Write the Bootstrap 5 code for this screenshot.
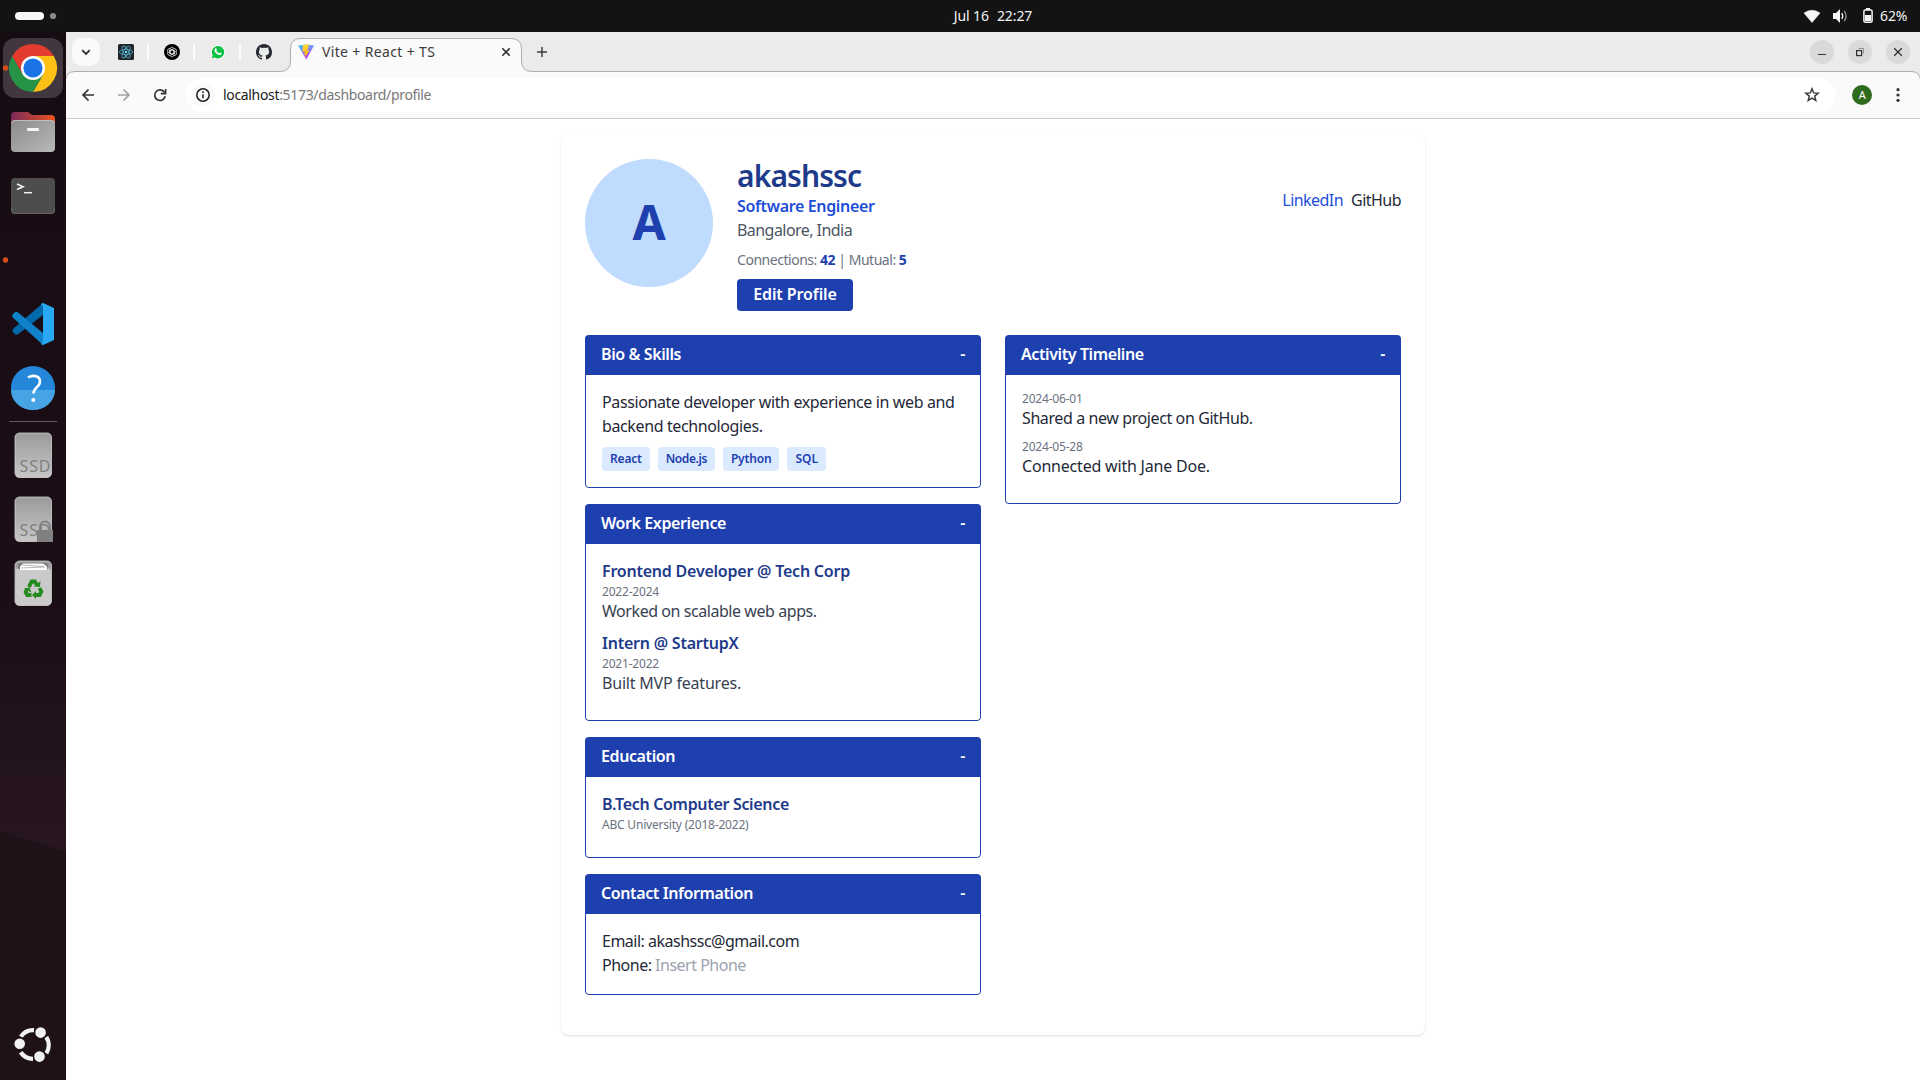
<!DOCTYPE html>
<html lang="en">
<head>
<meta charset="utf-8">
<meta name="viewport" content="width=device-width, initial-scale=1">
<title>Vite + React + TS</title>
<link href="https://cdn.jsdelivr.net/npm/bootstrap@5.3.0/dist/css/bootstrap.min.css" rel="stylesheet">
<style>
  :root { --navy: #1e40af; --navy-deep: #1e3a8a; }
  body { font-family: "Noto Sans", "Open Sans", sans-serif; font-size: 16px; line-height: 24px; letter-spacing: -.4px; color: #1f2937; height: 1080px; }
  svg { display: block; flex: none; }
  p, h1 { margin: 0; }

  /* desktop */
  .sysbar { height: 32px; background: #131313; color: #f2f2f2; font-size: 14px; letter-spacing: -.1px; }
  .sysbar .side { width: 300px; }
  .clock { padding-left: 66px; padding-bottom: 1px; }
  .dock { width: 66px; flex: none; padding-top: 4px; background: linear-gradient(197deg, transparent 783px, #1e1218 784px), linear-gradient(#180c13, #1b0e17 55%, #28161f 78%); }
  .slot { height: 64px; width: 66px; }
  .dock hr { width: 48px; height: 1px; margin: 1px 0; border: 0; background: #62575d; opacity: 1; }
  .dock text { letter-spacing: 0; }

  /* browser */
  .strip { height: 46px; background: #ebebeb; font-size: 14px; margin-bottom: -7px; }
  .strip > .outline { left: 0; top: 0; }
  .strip-row { height: 40px; z-index: 1; }
  .tab-menu { width: 28px; height: 28px; border-radius: 10px; background: #fafafa; margin-left: 6px; margin-right: 11px; }
  .pinned { width: 46px; padding-left: 7px; }
  .pinned .sep { width: 2px; height: 16px; background: #fbfbfb; margin-left: 13px; }
  .active-tab { width: 231px; margin-left: -5px; padding: 0 9px 0 8px; color: #3c3c3c; letter-spacing: .35px; }
  .new-tab { margin-left: 15px; }
  .win { width: 24px; height: 24px; border-radius: 50%; background: #dadada; }
  .toolbar { position: relative; z-index: 1; height: 48px; border-bottom: 1px solid #c9c9c9; font-size: 14px; }
  .omni { height: 34px; border-radius: 17px; background: #fff; color: #777; letter-spacing: -.33px; padding-left: 5px; }
  .omni .info { width: 24px; height: 24px; border-radius: 50%; background: #fafafa; margin-right: 8px; }
  .omni b { font-weight: 400; color: #1b1b1b; }
  .account { width: 20px; height: 20px; border-radius: 50%; background: #2f6b1d; color: #fff; font-size: 11px; }

  /* page */
  .page { background: #fff; padding-top: 16px; }
  .profile { width: 864px; height: 900px; padding: 24px; border-radius: 8px; background: #fff; box-shadow: 0 1px 3px rgba(0,0,0,.1), 0 1px 2px -1px rgba(0,0,0,.1); }
  .profile p { line-height: 22px; padding-bottom: 2px; }
  .face { width: 128px; height: 128px; padding-bottom: 2px; border-radius: 50%; background: #bfdbfe; color: var(--navy); font-size: 48px; font-weight: 700; }
  .profile h1 { font-size: 30px; line-height: 34px; padding-bottom: 2px; font-weight: 600; letter-spacing: -.9px; color: var(--navy-deep); }
  .role { color: #1d4ed8; font-weight: 600; letter-spacing: -.35px; }
  .place { color: #4b5563; letter-spacing: -.55px; }
  .profile .stats { font-size: 14px; line-height: 18px; color: #6b7280; letter-spacing: -.47px; }
  .stats b { color: var(--navy); font-weight: 700; }
  .btn-edit { --bs-btn-bg: #1e40af; --bs-btn-color: #fff; --bs-btn-border-width: 0; --bs-btn-border-radius: 4px; --bs-btn-padding-y: 0; --bs-btn-padding-x: 0; width: 116px; height: 32px; padding-bottom: 3px; line-height: 28px; font-weight: 600; letter-spacing: -.1px; }
  .links { padding-top: 29px; letter-spacing: -.54px; }
  .links a { text-decoration: none; color: #1f2937; }
  .links a.blue { color: #1d4ed8; }
  .col-half { width: 396px; }
  .panel { border-radius: 4px; overflow: hidden; margin-bottom: 16px; }
  .panel-top { height: 40px; padding: 7px 16px 9px; background: var(--navy); color: #fff; font-weight: 600; letter-spacing: -.4px; }
  .panel-in { border: 1px solid var(--navy); border-top: 0; border-radius: 0 0 4px 4px; padding: 16px; }
  .chip { height: 24px; padding: 0 8px; border-radius: 4px; background: #dbeafe; color: var(--navy); font-size: 12px; font-weight: 600; letter-spacing: -.18px; }
  .chip.tight { letter-spacing: -.42px; }
  .chip.open { letter-spacing: .1px; }
  .job { color: var(--navy-deep); font-weight: 600; letter-spacing: -.22px; }
  .job.tight { letter-spacing: -.32px; }
  .profile .when { font-size: 12px; line-height: 16px; padding-bottom: 0; color: #6b7280; letter-spacing: -.2px; }
  .what { color: #374151; letter-spacing: -.44px; }
  .what.open, .event.open { letter-spacing: -.2px; }
  .hint { color: #9ca3af; }
  .profile .body-copy { line-height: 24px; margin-top: -1px; padding-bottom: 1px; letter-spacing: -.38px; }
  .contact { letter-spacing: -.5px; }
</style>
</head>
<body class="d-flex flex-column overflow-hidden">

<header class="sysbar d-flex align-items-center justify-content-between flex-shrink-0">
  <div class="side"><svg width="66" height="32"><rect x="15" y="12" width="29" height="8" rx="4" fill="#f6f6f6"/><circle cx="53" cy="16" r="3.1" fill="#8a8a8a"/></svg></div>
  <div class="clock d-flex gap-2"><span>Jul 16</span><span>22:27</span></div>
  <div class="side d-flex align-items-center justify-content-end pe-2">
    <svg width="80" height="32" viewBox="1800 0 80 32" fill="#f6f6f6">
      <path d="M1804 13q8-5.500 16 0l-8 9.500z" stroke="#f6f6f6" stroke-linejoin="round" stroke-width=".6"/>
      <path d="M1833 13h3l4-4v14l-4-4h-3z"/>
      <path d="M1841.800 13q1.800 3 0 6" fill="none" stroke="#f6f6f6" stroke-width="1.300"/><path d="M1844.300 10.800q3.500 5.200 0 10.400" fill="none" stroke="#8d8d8d" stroke-width="1.400"/>
      <rect x="1863.900" y="10" width="8.200" height="12.200" rx="1.500" fill="none" stroke="#f6f6f6" stroke-width="1.500"/><rect x="1866" y="8" width="4" height="2"/><rect x="1865" y="15" width="6" height="6"/>
    </svg>
    <span style="width:32px">62%</span>
  </div>
</header>

<div class="d-flex flex-grow-1">
  <nav class="dock d-flex flex-column align-items-center">
    <svg class="slot" viewBox="0 36 66 64">
      <rect x="3" y="38" width="60" height="60" rx="12" fill="#42373e"/>
      <circle cx="5.500" cy="68" r="2.700" fill="#d64d1b"/>
      <path d="M33 68 12.200 56A24 24 0 0 1 53.800 56z" fill="#e33b2e"/>
      <path d="M33 56H53.800A24 24 0 0 1 33 92L43.400 74z" fill="#fcc016"/>
      <path d="M12.200 56A24 24 0 0 0 33 92L43.400 74 33 68 22.600 74z" fill="#269347"/>
      <path d="M12.200 56 22.600 74 33 56z" fill="#e33b2e"/>
      <circle cx="33" cy="68" r="12" fill="#fff"/><circle cx="33" cy="68" r="9.600" fill="#1b73e8"/>
    </svg>
    <svg class="slot" viewBox="0 100 66 64">
      <defs><linearGradient id="fo"><stop stop-color="#7b2a59"/><stop offset="1" stop-color="#e95420"/></linearGradient><linearGradient id="gr" x2="1" y2="1"><stop stop-color="#8b8b8b"/><stop offset="1" stop-color="#b9b9b9"/></linearGradient></defs>
      <path d="M11 116q0-4 4-4h13l4 3h19q4 0 4 4v8H11z" fill="url(#fo)"/>
      <rect x="11" y="120" width="44" height="32" rx="4" fill="url(#gr)"/><path d="M12 123q0-2.500 3-2.500h36q3 0 3 2.500" fill="none" stroke="#bdbdbd"/>
      <rect x="27" y="128" width="12" height="3" rx="1" fill="#f5f5f5"/>
    </svg>
    <svg class="slot" viewBox="0 164 66 64">
      <rect x="11" y="178" width="44" height="36" rx="4" fill="#4d4d4d"/><path d="M11.500 208v2q0 3.500 3.500 3.500h36q3.500 0 3.500-3.500v-2" fill="none" stroke="#626262"/>
      <path d="m17 184 6 2.800-6 2.800" fill="none" stroke="#f3f3f3" stroke-width="1.700"/><path d="M24 192.700h8" stroke="#f3f3f3" stroke-width="1.500"/>
    </svg>
    <svg class="slot" viewBox="0 228 66 64"><circle cx="5.500" cy="260" r="2.700" fill="#d64d1b"/></svg>
    <svg class="slot" viewBox="0 292 66 64">
      <path d="M43 303 13 329q-1.500 2 0 3.300l2 2q1.500 1 3 0L43 315z" fill="#0068ab"/>
      <path d="M43 345 12.800 317.500q-1.500-1.800 0-3.200l2-2q1.500-1.200 3 0L43 333z" fill="#0f82c9"/>
      <path d="M43 303 54 308v32l-11 5q-1.500 0-2-1.500 2 .500 2-2v-35q0-2-2-1.500.500-2 2-2z" fill="#29a9f3"/>
    </svg>
    <svg class="slot" viewBox="0 356 66 64">
      <circle cx="33" cy="388" r="22" fill="#2487d9"/><path d="M11 390a22 20 0 0 0 44 0z" fill="#46a3e4"/>
      <path d="M28 377.500c6-3.500 12-1 12 4 0 6-6.500 5.500-6.500 12" fill="none" stroke="#fff" stroke-width="2.600"/><circle cx="33.300" cy="400" r="2.100" fill="#fff"/>
    </svg>
    <hr>
    <svg class="slot" viewBox="0 423 66 64">
      <defs><linearGradient id="dk" x2="0" y2="1"><stop stop-color="#9b9b9b"/><stop offset="1" stop-color="#c6c6c6"/></linearGradient></defs>
      <rect x="15" y="433" width="36.500" height="44.500" rx="4.500" fill="url(#dk)" stroke="#d2d2d2" stroke-width=".8"/>
      <text x="19.500" y="472" font-size="16" textLength="31" fill="#808080">SSD</text>
    </svg>
    <svg class="slot" viewBox="0 487 66 64">
      <rect x="15" y="497" width="36.500" height="44.500" rx="4.500" fill="url(#dk)" stroke="#d2d2d2" stroke-width=".8"/>
      <text x="19.500" y="536" font-size="16" textLength="31" fill="#808080">SSD</text>
      <rect x="37" y="530" width="16" height="12" fill="#808080"/><path d="M40 530v-3.500a5 5 0 0 1 10 0v3.500" fill="none" stroke="#808080" stroke-width="1.800"/>
    </svg>
    <svg class="slot" viewBox="0 551 66 64">
      <rect x="15" y="561" width="36.500" height="44.500" rx="4.500" fill="url(#dk)" stroke="#d2d2d2" stroke-width=".8"/><rect x="15.500" y="568" width="35.500" height="37" rx="4" fill="#cacaca"/>
      <rect x="18" y="563" width="30" height="7" rx="3" fill="#777"/><path d="M20 570v-3.500l3-3h20l4 3v3.500z" fill="#fff"/><path d="m22 565 22 1.500M21 568l24-1" stroke="#999" stroke-width=".7"/>
      <g fill="none" stroke="#258a1c" stroke-width="3.800"><path d="m28.800 587 3-5.500h3l2 3.500"/><path d="m39.500 588 1.800 3.500-1.700 3.500h-4.600"/><path d="M31.500 595h-4.300l-1.600-3 1.800-3.500"/></g>
      <g fill="#258a1c"><path d="m34 586.500 6 .5.500-6z"/><path d="M36 591v8l-4-4z"/><path d="m24 588.500 5.500-1 2 5z"/></g>
    </svg>
    <svg class="slot mt-auto mb-1" viewBox="0 1012 66 64">
      <g fill="none" stroke="#f2f2f2" stroke-width="4.300"><path d="M20.900 1036.600A14.800 14.800 0 0 1 34 1030.200"/><path d="M46.300 1037A14.800 14.800 0 0 1 46.300 1053.200"/><path d="M20.700 1052.200A14.800 14.800 0 0 0 33 1058.800"/></g>
      <g fill="#f2f2f2" stroke="#1e1218" stroke-width="1.400"><circle cx="40.600" cy="1032.600" r="6"/><circle cx="19.700" cy="1043.800" r="6"/><circle cx="39.500" cy="1056.600" r="6"/></g>
    </svg>
  </nav>

  <main class="d-flex flex-column flex-grow-1">
    <div class="strip position-relative flex-shrink-0">
      <svg class="outline position-absolute" width="1854" height="87" viewBox="66 32 1854 87">
        <path d="M65.500 119V81q0-9.500 9.500-9.500H280q10.500 0 10.500-10.500V49q0-10.500 10.500-10.500H511q10.500 0 10.500 10.500V61q0 10.500 10.500 10.500H1911q9.500 0 9.500 9.500V119z" fill="#fafafa" stroke="#adadad"/>
      </svg>
      <div class="strip-row d-flex align-items-center position-relative">
        <div class="tab-menu d-flex align-items-center justify-content-center"><svg width="12" height="12" viewBox="0 0 12 12"><path d="m2.200 4.200 3.800 3.800 3.800-3.800" fill="none" stroke="#303030" stroke-width="1.800"/></svg></div>
        <div class="pinned d-flex align-items-center">
          <svg width="16" height="16" viewBox="0 0 16 16"><rect width="16" height="16" rx="1.500" fill="#20232a"/><g fill="none" stroke="#4fa3bd" stroke-width=".9"><ellipse cx="8" cy="8" rx="6.600" ry="2.600"/><ellipse cx="8" cy="8" rx="6.600" ry="2.600" transform="rotate(60 8 8)"/><ellipse cx="8" cy="8" rx="6.600" ry="2.600" transform="rotate(120 8 8)"/></g><circle cx="8" cy="8" r="1.300" fill="#61dafb"/></svg>
          <span class="sep"></span>
        </div>
        <div class="pinned d-flex align-items-center">
          <svg width="16" height="16" viewBox="0 0 16 16"><circle cx="8" cy="8" r="8" fill="#000"/><g fill="none" stroke="#eee" stroke-width=".75"><g id="pt"><path d="M6 8V5.200a2.100 2.100 0 0 1 4-.8M6 6.800l2-1.200 3 1.700"/></g><use href="#pt" transform="rotate(60 8 8)"/><use href="#pt" transform="rotate(120 8 8)"/><use href="#pt" transform="rotate(180 8 8)"/><use href="#pt" transform="rotate(240 8 8)"/><use href="#pt" transform="rotate(300 8 8)"/></g></svg>
          <span class="sep"></span>
        </div>
        <div class="pinned d-flex align-items-center">
          <svg width="16" height="16" viewBox="0 0 16 16"><path d="M.8 15.300 1.900 11.500A7 7 0 1 1 4.700 14.300z" fill="#fff"/><path d="M1.700 14.400 2.700 11.300A6.200 6.200 0 1 1 4.900 13.500z" fill="#0bc143"/><path d="M5.300 4.500c.8-.6 1.100-.2 1.600 1.200.1.500-.5.700-.5 1.100.6 1.200 1.500 1.900 2.700 2.400.4 0 .7-.9 1.100-.8 1.500.7 1.500.8 1.300 1.500-.5 1.200-2 1.300-3.500.6-1.600-.7-2.900-2-3.400-3.300-.3-1.100 0-2.100.7-2.700z" fill="#fff"/></svg>
          <span class="sep"></span>
        </div>
        <div class="pinned d-flex align-items-center">
          <svg width="16" height="16" viewBox="0 0 16 16" fill="#24292f"><path d="M8 0C3.580 0 0 3.580 0 8c0 3.540 2.290 6.530 5.470 7.590.4.070.55-.17.55-.38 0-.19-.01-.82-.01-1.490-2.010.37-2.530-.49-2.690-.94-.09-.23-.48-.94-.82-1.130-.28-.15-.68-.52-.01-.53.63-.01 1.080.58 1.230.82.72 1.210 1.870.87 2.330.66.07-.52.28-.87.51-1.070-1.780-.2-3.640-.89-3.640-3.950 0-.87.31-1.590.82-2.150-.08-.2-.36-1.020.08-2.120 0 0 .67-.21 2.200.82.64-.18 1.320-.27 2-.27s1.360.09 2 .27c1.530-1.040 2.200-.82 2.200-.82.44 1.100.16 1.920.08 2.120.51.56.82 1.270.82 2.150 0 3.070-1.870 3.750-3.650 3.950.29.25.54.73.54 1.480 0 1.070-.01 1.930-.01 2.200 0 .21.15.46.55.38A8.010 8.010 0 0 0 16 8c0-4.420-3.580-8-8-8z"/></svg>
        </div>
        <div class="active-tab d-flex align-items-center">
          <svg class="me-2" width="16" height="16" viewBox="0 0 16 16"><defs><linearGradient id="vt" x2=".4" y2="1"><stop stop-color="#41d1ff"/><stop offset="1" stop-color="#bd34fe"/></linearGradient><linearGradient id="vb" x2="0" y2="1"><stop stop-color="#ffdd35"/><stop offset="1" stop-color="#ffa800"/></linearGradient></defs><path d="M0 1.500 8 .5l8 1L8.300 15.600z" fill="url(#vt)"/><path d="M11.200 0 5 1 4.500 7.800l2.400-.4-.8 3.500 1.400-.4-.7 3.600 4.800-8-2.300.3z" fill="url(#vb)"/></svg>
          <span>Vite + React + TS</span>
          <svg class="ms-auto" width="12" height="12" viewBox="0 0 12 12"><path d="m2.300 2.300 7.400 7.400m0-7.400-7.400 7.400" stroke="#303030" stroke-width="1.600"/></svg>
        </div>
        <svg class="new-tab" width="12" height="12" viewBox="0 0 12 12"><path d="M6 1v10M1 6h10" stroke="#3c3c3c" stroke-width="1.500"/></svg>
        <div class="d-flex ms-auto" style="gap:14px;padding-right:10px">
          <div class="win"><svg width="24" height="24"><path d="M8 14.500h8" stroke="#303030"/></svg></div>
          <div class="win"><svg width="24" height="24" fill="none"><path d="M10.500 8.500h5v5" stroke="#8d8d8d"/><rect x="8.600" y="10.600" width="5" height="5" stroke="#303030" stroke-width="1.200"/></svg></div>
          <div class="win"><svg width="24" height="24"><path d="m8.200 8.200 7.600 7.600m0-7.600-7.600 7.600" stroke="#303030" stroke-width="1.300"/></svg></div>
        </div>
      </div>
    </div>
    <div class="toolbar flex-shrink-0 d-flex align-items-center">
      <svg width="120" height="34" viewBox="66 78 120 34" fill="none" stroke-width="1.700"><path d="M94 95H83m5.500-5.500L83 95l5.500 5.500" stroke="#333"/><path d="M118 95h11m-5.500-5.500L129 95l-5.500 5.500" stroke="#a3a3a3"/><path d="M164.600 92.500a5.300 5.300 0 1 0 .6 3.800" stroke="#333"/><path d="M165.600 89v4.700h-4.800" stroke="#333"/></svg>
      <div class="omni d-flex align-items-center flex-grow-1">
        <span class="info"><svg width="24" height="24"><circle cx="12" cy="12" r="6.200" fill="none" stroke="#1f1f1f" stroke-width="1.500"/><path d="M12 11.200v4M12 8.300v1.600" stroke="#1f1f1f" stroke-width="1.500"/></svg></span>
        <span><b>localhost</b>:5173/dashboard/profile</span>
        <svg class="ms-auto me-3" width="16" height="16" viewBox="0 0 16 16"><path d="m8 1.700 1.700 4.200 4.500.3-3.500 2.900 1.100 4.400L8 11.100l-3.800 2.400 1.100-4.400L1.800 6.200l4.500-.3z" fill="none" stroke="#333" stroke-width="1.400"/></svg>
      </div>
      <span class="account d-flex align-items-center justify-content-center ms-3">A</span>
      <svg class="mx-2" width="32" height="16" viewBox="0 0 32 16" fill="#333"><circle cx="18" cy="2.700" r="1.600"/><circle cx="18" cy="8" r="1.600"/><circle cx="18" cy="13.300" r="1.600"/></svg>
    </div>

    <div class="page flex-grow-1">
      <section class="profile mx-auto">
        <div class="d-flex">
          <div class="face d-flex align-items-center justify-content-center">A</div>
          <div class="ms-4">
            <h1>akashssc</h1>
            <p class="role">Software Engineer</p>
            <p class="place">Bangalore, India</p>
            <p class="stats mt-2">Connections: <b>42</b> | Mutual: <b>5</b></p>
            <button class="btn btn-edit mt-2 d-block">Edit Profile</button>
          </div>
          <div class="links d-flex gap-2 ms-auto"><a class="blue" href="#">LinkedIn</a><a href="#">GitHub</a></div>
        </div>

        <div class="d-flex gap-4 align-items-start mt-4">
          <div class="col-half">
            <div class="panel">
              <div class="panel-top d-flex justify-content-between"><span>Bio &amp; Skills</span><span>-</span></div>
              <div class="panel-in">
                <p class="body-copy">Passionate developer with experience in web and backend technologies.</p>
                <div class="d-flex gap-2 mt-2"><span class="chip">React</span><span class="chip tight">Node.js</span><span class="chip">Python</span><span class="chip open">SQL</span></div>
              </div>
            </div>
            <div class="panel">
              <div class="panel-top d-flex justify-content-between"><span>Work Experience</span><span>-</span></div>
              <div class="panel-in">
                <div class="mb-2"><p class="job">Frontend Developer @ Tech Corp</p><p class="when">2022-2024</p><p class="what">Worked on scalable web apps.</p></div>
                <div class="mb-2"><p class="job">Intern @ StartupX</p><p class="when">2021-2022</p><p class="what open">Built MVP features.</p></div>
              </div>
            </div>
            <div class="panel">
              <div class="panel-top d-flex justify-content-between"><span>Education</span><span>-</span></div>
              <div class="panel-in">
                <div class="mb-2"><p class="job tight">B.Tech Computer Science</p><p class="when">ABC University (2018-2022)</p></div>
              </div>
            </div>
            <div class="panel">
              <div class="panel-top d-flex justify-content-between"><span>Contact Information</span><span>-</span></div>
              <div class="panel-in contact">
                <p>Email: akashssc@gmail.com</p>
                <p>Phone: <span class="hint">Insert Phone</span></p>
              </div>
            </div>
          </div>
          <div class="col-half">
            <div class="panel">
              <div class="panel-top d-flex justify-content-between"><span>Activity Timeline</span><span>-</span></div>
              <div class="panel-in">
                <div class="mb-2"><p class="when">2024-06-01</p><p class="event">Shared a new project on GitHub.</p></div>
                <div class="mb-2"><p class="when">2024-05-28</p><p class="event open">Connected with Jane Doe.</p></div>
              </div>
            </div>
          </div>
        </div>
      </section>
    </div>
  </main>
</div>
<script src="https://cdn.jsdelivr.net/npm/bootstrap@5.3.0/dist/js/bootstrap.bundle.min.js"></script>
</body>
</html>
